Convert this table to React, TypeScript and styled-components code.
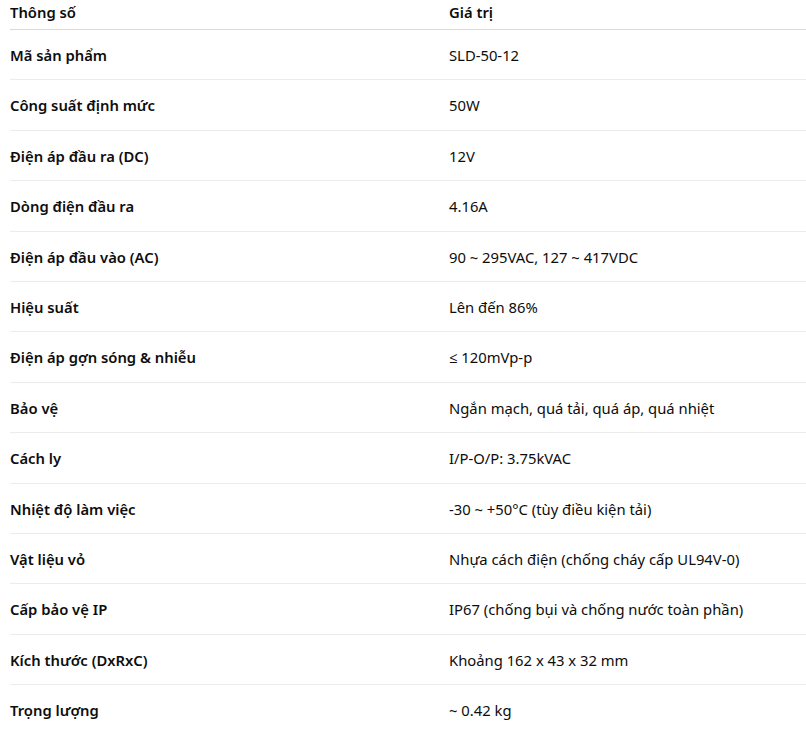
import React from "react";
import styled, { createGlobalStyle } from "styled-components";

const GlobalStyle = createGlobalStyle`
  html, body {
    margin: 0;
    padding: 0;
    background: #ffffff;
  }
  body {
    font-family: "Noto Sans", "Open Sans", sans-serif;
    color: #0d0d0d;
  }
`;

type Spec = { name: string; value: string };

const specs: Spec[] = [
  { name: "Mã sản phẩm", value: "SLD-50-12" },
  { name: "Công suất định mức", value: "50W" },
  { name: "Điện áp đầu ra (DC)", value: "12V" },
  { name: "Dòng điện đầu ra", value: "4.16A" },
  { name: "Điện áp đầu vào (AC)", value: "90 ~ 295VAC, 127 ~ 417VDC" },
  { name: "Hiệu suất", value: "Lên đến 86%" },
  { name: "Điện áp gợn sóng & nhiễu", value: "≤ 120mVp-p" },
  { name: "Bảo vệ", value: "Ngắn mạch, quá tải, quá áp, quá nhiệt" },
  { name: "Cách ly", value: "I/P-O/P: 3.75kVAC" },
  { name: "Nhiệt độ làm việc", value: "-30 ~ +50°C (tùy điều kiện tải)" },
  { name: "Vật liệu vỏ", value: "Nhựa cách điện (chống cháy cấp UL94V-0)" },
  { name: "Cấp bảo vệ IP", value: "IP67 (chống bụi và chống nước toàn phần)" },
  { name: "Kích thước (DxRxC)", value: "Khoảng 162 x 43 x 32 mm" },
  { name: "Trọng lượng", value: "~ 0.42 kg" },
];

export default function App() {
  return (
    <>
      <GlobalStyle />
      <Table>
        <HeadRow>
          <HeadCell>Thông số</HeadCell>
          <HeadCell>Giá trị</HeadCell>
        </HeadRow>
        {specs.map((s, i) => (
          <Row key={s.name} $last={i === specs.length - 1}>
            <NameCell>{s.name}</NameCell>
            <ValueCell>{s.value}</ValueCell>
          </Row>
        ))}
      </Table>
    </>
  );
}

const Table = styled.div`
  margin-left: 10px;
  display: flex;
  flex-direction: column;
  font-size: 14.8px;
  line-height: 20px;
`;

const HeadRow = styled.div`
  display: grid;
  grid-template-columns: 439px 1fr;
  padding: 2px 0 7px;
  border-bottom: 1px solid #d9d9d9;
`;

const HeadCell = styled.div`
  font-weight: 600;
`;

const Row = styled.div<{ $last?: boolean }>`
  display: grid;
  grid-template-columns: 439px 1fr;
  padding: 15px 0 14.4px;
  border-bottom: 1px solid ${(p) => (p.$last ? "transparent" : "#ececec")};
`;

const NameCell = styled.div`
  font-weight: 600;
`;

const ValueCell = styled.div`
  font-weight: 400;
`;
